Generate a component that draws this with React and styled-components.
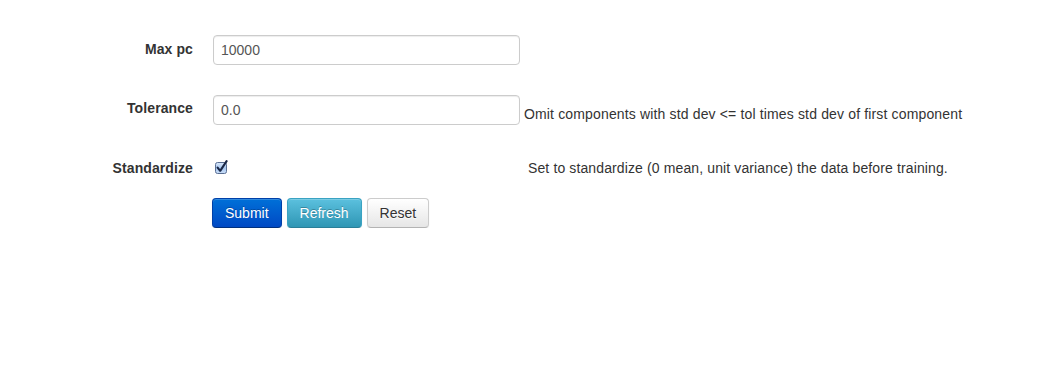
import styled, { createGlobalStyle } from "styled-components";

const GlobalStyle = createGlobalStyle`
  html, body {
    margin: 0;
    padding: 0;
    background: #fff;
  }
  body {
    font-family: "Liberation Sans", Arial, Helvetica, sans-serif;
    font-size: 14px;
    line-height: 20px;
    color: #333;
  }
`;

const Form = styled.form`
  padding: 35px 0 0 33px;
  display: flex;
  flex-direction: column;
`;

const ControlGroup = styled.div`
  display: flex;
  align-items: ${(props) => props.$align || "flex-start"};
  margin-bottom: ${(props) => props.$gap || 30}px;
`;

const Label = styled.label`
  width: 160px;
  flex: none;
  text-align: right;
  font-weight: bold;
  letter-spacing: 0.1px;
  padding-top: ${(props) => props.$top ?? 4}px;
  margin-right: 20px;
  align-self: flex-start;
`;

const Controls = styled.div`
  display: flex;
  align-items: flex-end;
`;

const TextInput = styled.input`
  box-sizing: border-box;
  width: 307px;
  height: 30px;
  padding: 4px 7px;
  font-family: inherit;
  font-size: 14px;
  line-height: 20px;
  color: #555;
  border: 1px solid #ccc;
  border-radius: 4px;
  box-shadow: inset 0 1px 1px rgba(0, 0, 0, 0.075);
  outline: none;
`;

const HelpInline = styled.span`
  margin-left: 4px;
  padding-bottom: 1px;
  color: #333;
  letter-spacing: 0.15px;
  white-space: nowrap;
`;

const CheckWrap = styled.div`
  width: 311px;
  height: 20px;
  display: flex;
  align-items: flex-start;
`;

const CheckBox = styled.span`
  display: block;
  margin: 2px 0 0 2px;
  width: 14px;
  height: 15px;
`;

const HelpBlock = styled.span`
  margin-left: 4px;
  margin-top: -3px;
  letter-spacing: 0.12px;
  white-space: nowrap;
`;

const Actions = styled.div`
  display: flex;
  gap: 5px;
  margin-left: 179px;
`;

const variants = {
  primary: {
    bg: "linear-gradient(to bottom, #0070d8, #0049c4)",
    border: "#0040a8 #0040a8 #00307e",
    color: "#fff",
    shadow: "0 -1px 0 rgba(0,0,0,0.25)",
  },
  info: {
    bg: "linear-gradient(to bottom, #5bc0de, #2f96b4)",
    border: "#3aa3c2 #3aa3c2 #2a7f98",
    color: "#fff",
    shadow: "0 -1px 0 rgba(0,0,0,0.25)",
  },
  default: {
    bg: "linear-gradient(to bottom, #ffffff, #e6e6e6)",
    border: "#ccc #ccc #b3b3b3",
    color: "#333",
    shadow: "0 1px 1px rgba(255,255,255,0.75)",
  },
};

const Button = styled.button`
  box-sizing: border-box;
  height: 30px;
  padding: 4px 12px;
  font-family: inherit;
  font-size: 14px;
  line-height: 20px;
  color: ${(p) => variants[p.$kind].color};
  text-shadow: ${(p) => variants[p.$kind].shadow};
  background: ${(p) => variants[p.$kind].bg};
  border: 1px solid;
  border-color: ${(p) => variants[p.$kind].border};
  border-radius: 4px;
  box-shadow: inset 0 1px 0 rgba(255, 255, 255, 0.2), 0 1px 2px rgba(0, 0, 0, 0.05);
  cursor: pointer;
`;

function MacCheck() {
  return (
    <svg width="14" height="15" viewBox="0 0 14 15">
      <defs>
        <linearGradient id="cbg" x1="0" y1="0" x2="0" y2="1">
          <stop offset="0" stopColor="#dce9fb" />
          <stop offset="0.5" stopColor="#a8c8f0" />
          <stop offset="1" stopColor="#c9ddf7" />
        </linearGradient>
      </defs>
      <rect x="0.5" y="2.5" width="11" height="11" rx="2" fill="url(#cbg)" stroke="#5a6f94" />
      <path d="M2.6 7.6 L5.2 10.8 L11.6 1.2" fill="none" stroke="#1a2746" strokeWidth="2.1" strokeLinecap="round" strokeLinejoin="round" />
    </svg>
  );
}

export default function App() {
  return (
    <>
      <GlobalStyle />
      <Form onSubmit={(e) => e.preventDefault()}>
        <ControlGroup>
          <Label>Max pc</Label>
          <Controls>
            <TextInput defaultValue="10000" />
          </Controls>
        </ControlGroup>
        <ControlGroup $gap={33}>
          <Label $top={3}>Tolerance</Label>
          <Controls>
            <TextInput defaultValue="0.0" />
            <HelpInline>Omit components with std dev &lt;= tol times std dev of first component</HelpInline>
          </Controls>
        </ControlGroup>
        <ControlGroup $gap={20}>
          <Label $top={0}>Standardize</Label>
          <Controls>
            <CheckWrap>
              <CheckBox>
                <MacCheck />
              </CheckBox>
            </CheckWrap>
            <HelpBlock>Set to standardize (0 mean, unit variance) the data before training.</HelpBlock>
          </Controls>
        </ControlGroup>
        <Actions>
          <Button $kind="primary">Submit</Button>
          <Button $kind="info">Refresh</Button>
          <Button $kind="default" type="reset">Reset</Button>
        </Actions>
      </Form>
    </>
  );
}
